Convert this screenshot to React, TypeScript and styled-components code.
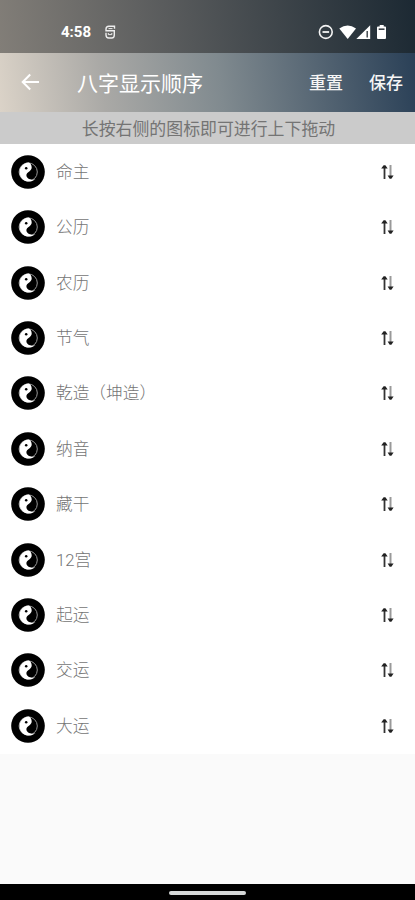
import React from "react";
import styled, { createGlobalStyle } from "styled-components";

const GlobalStyle = createGlobalStyle`
  * { box-sizing: border-box; }
  body { margin: 0; background: #fafafa; }
`;

const Screen = styled.div`
  width: 415px;
  height: 900px;
  display: flex;
  flex-direction: column;
  overflow: hidden;
  background: #fafafa;
  font-family: "Noto Sans CJK SC", Roboto, sans-serif;
`;

const StatusBar = styled.header`
  height: 53px;
  flex: none;
  display: flex;
  align-items: center;
  padding: 11px 28px 0 61px;
  color: #fff;
  background: linear-gradient(82deg, #827e78 0%, #5a5c5d 40%, #1c2933 100%);
`;

const Clock = styled.span`
  width: 43px;
  font: 700 15px/20px Roboto, sans-serif;
`;

const StatusIcons = styled.div`
  margin-left: auto;
  display: flex;
  align-items: center;
`;

const Toolbar = styled.nav`
  height: 59px;
  flex: none;
  display: flex;
  align-items: center;
  padding: 0 12px 1px 20px;
  color: #fff;
  background: linear-gradient(82deg, #dbd3c8 0%, #aaa9a6 25%, #808a8f 53%, #2a4057 100%);
`;

const Title = styled.h1`
  margin: 0 auto 1px 36px;
  font-size: 21px;
  font-weight: 400;
  line-height: 30px;
`;

const Action = styled.button`
  margin: 0 0 0 26px;
  padding: 0;
  border: 0;
  background: none;
  color: #f6f6f6;
  font: 500 17px/24px "Noto Sans CJK SC", sans-serif;
`;

const Hint = styled.p`
  height: 32px;
  flex: none;
  margin: 0;
  padding-left: 2px;
  background: #cbcbcb;
  color: #747474;
  text-align: center;
  font-size: 16.9px;
  line-height: 32px;
`;

const List = styled.ul`
  margin: 0;
  padding: 0;
  flex: none;
  height: 609.5px;
  display: grid;
  grid-template-rows: repeat(11, 1fr);
  list-style: none;
  background: #fff;
`;

const Row = styled.li`
  display: flex;
  align-items: center;
  padding: 0 19px 0 11px;
`;

const Label = styled.span`
  flex: 1;
  margin-left: 11px;
  padding-top: 2px;
  color: #747474;
  font-family: Roboto, "Noto Sans CJK SC", sans-serif;
  font-size: 16.7px;
  font-weight: 300;
  line-height: 24px;
`;

const NavigationBar = styled.footer`
  margin-top: auto;
  height: 16px;
  flex: none;
  display: flex;
  justify-content: center;
  padding-top: 7px;
  background: #000;
`;

const HomeHandle = styled.div`
  width: 77px;
  height: 4px;
  border-radius: 2px;
  background: #d5d8d8;
`;

const TaijiIcon = () => (
  <svg width="34" height="34" viewBox="0 0 34 34">
    <circle cx="17" cy="17" r="16.8" fill="#000" />
    <circle cx="17.2" cy="17" r="9.1" fill="#000" stroke="#999" strokeWidth="1" />
    <path d="M17.8 7.6A9.5 9.5 0 1 0 24.5 24C20.5 25.7 15.4 23.8 15.4 20.3C15.4 17.2 20.4 16.3 20.7 12.7C20.8 10.3 19.6 8.5 17.8 7.6Z" fill="#fff" />
    <circle cx="15.2" cy="13.2" r="1.25" fill="#000" />
  </svg>
);

const ReorderIcon = () => (
  <svg width="18" height="18" viewBox="0 0 18 18" fill="none">
    <path d="M6.5 4V16" stroke="#333" strokeWidth="1.8" />
    <path d="M3.2 5.6L5.6 2.3H7.4L9.7 5.6Z" fill="#222" />
    <path d="M12.5 2V13" stroke="#999" strokeWidth="2" />
    <path d="M9.6 12.5H15.6L13.4 15.8H11.7Z" fill="#222" />
  </svg>
);

const BackIcon = () => (
  <svg width="21" height="20" viewBox="0 0 21 20" fill="none" stroke="#fff" strokeWidth="2">
    <path d="M19 10H3M10.2 2.5L2.7 10L10.2 17.5" />
  </svg>
);

const AppNotificationIcon = () => (
  <svg width="13" height="16" viewBox="0 0 13 16" fill="none" stroke="#eee" strokeWidth="1.4">
    <path d="M10.5 4.8V2.2H5C3 2.2 2 3.2 2 5V6.8H10.3V11C10.3 13 9.3 14 7.8 14H4.8C3 14 2 13 2 11V8.8" />
    <path d="M4.5 4.6H8.5M4.3 9V10.6H7.8V9" strokeWidth="1" />
  </svg>
);

const SystemIcons = () => (
  <svg width="70" height="18" viewBox="0 0 70 18" fill="#fff">
    <circle cx="8.8" cy="9" r="6.4" fill="none" stroke="#f4f4f4" strokeWidth="1.6" />
    <path d="M5.5 9H12.1" stroke="#f4f4f4" strokeWidth="1.8" />
    <path d="M22.3 5.5Q30.7 -.5 39 5.5L30.7 16Z" />
    <path d="M39.3 16L53.2 2.2V16Z" />
    <path d="M50.2 8V14.5" stroke="#394047" strokeWidth="1.4" />
    <path d="M61 3.5H62.7V2H66.7V3.5H68.2Q69 3.5 69 4.5V15Q69 16 68 16H61Q60 16 60 15V4.5Q60 3.5 61 3.5Z" />
    <path d="M61.7 6.2H67.5" stroke="#394047" strokeWidth="1.6" />
  </svg>
);

const items = ["命主", "公历", "农历", "节气", "乾造（坤造）", "纳音", "藏干", "12宫", "起运", "交运", "大运"];

export default function App() {
  return (
    <>
      <GlobalStyle />
      <Screen>
        <StatusBar>
          <Clock>4:58</Clock>
          <AppNotificationIcon />
          <StatusIcons><SystemIcons /></StatusIcons>
        </StatusBar>
        <Toolbar>
          <BackIcon />
          <Title>八字显示顺序</Title>
          <Action>重置</Action>
          <Action>保存</Action>
        </Toolbar>
        <Hint>长按右侧的图标即可进行上下拖动</Hint>
        <List>
          {items.map((item) => (
            <Row key={item}>
              <TaijiIcon />
              <Label>{item}</Label>
              <ReorderIcon />
            </Row>
          ))}
        </List>
        <NavigationBar><HomeHandle /></NavigationBar>
      </Screen>
    </>
  );
}
